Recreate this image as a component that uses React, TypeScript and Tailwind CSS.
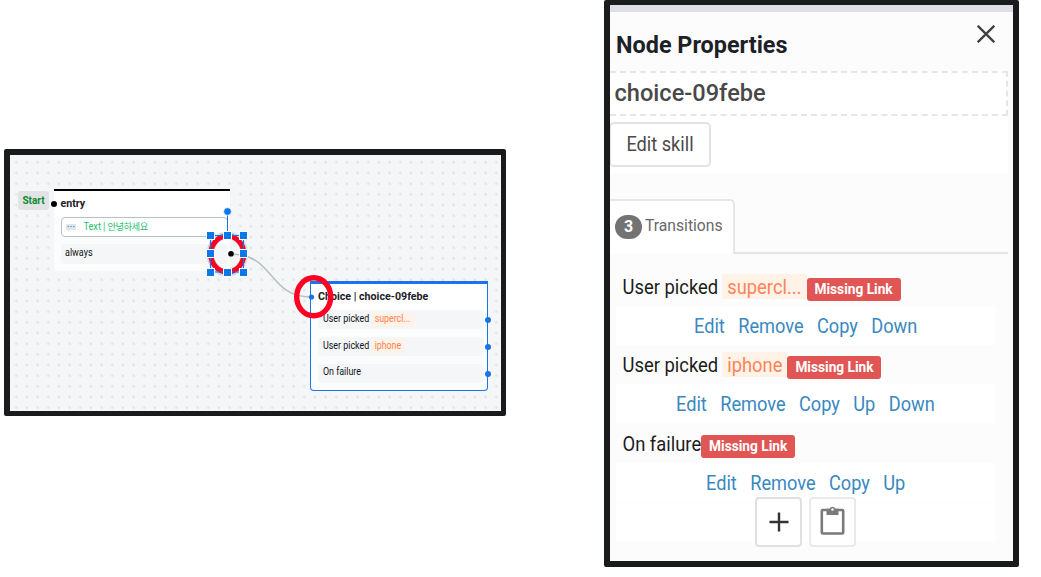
import React from "react";

function Port({ className }: { className: string }) {
  return <span className={`absolute h-[6px] w-[6px] rounded-full ${className}`} />;
}

function Handle({ className }: { className: string }) {
  return <span className={`absolute h-[7px] w-[7px] bg-[#0b78ea] outline outline-[1px] outline-white ${className}`} />;
}

function ChoiceRow({ label, value, width }: { label: string; value?: string; width?: string }) {
  return (
    <div className="relative flex h-[19px] items-center rounded-[4px] bg-[#f5f6f8] pl-[5px] text-[8.9px] text-[#101418]">
      <span className="scale-y-[1.14] whitespace-nowrap">{label}</span>
      {value && (
        <span className={`ml-[2px] flex h-[14px] items-center rounded-[2px] bg-[#fff3e8] pl-[3.5px] text-[8.8px] text-[#ff8050] ${width}`}>
          <span className="scale-y-[1.14]">{value}</span>
        </span>
      )}
      <Port className="-right-[7px] top-[7px] bg-[#1a73e8]" />
    </div>
  );
}

function Canvas() {
  return (
    <section className="relative h-[267px] w-[502px] shrink-0 overflow-hidden rounded-[2px] border-b-[5px] border-l-[6px] border-r-[5px] border-t-[6px] border-[#1a1b1c] bg-[#f5f6f8]">
      <svg className="absolute inset-0 h-full w-full">
        <defs>
          <pattern id="dots" x="0.6" y="1.7" width="10.667" height="10.667" patternUnits="userSpaceOnUse">
            <rect x="4.6" y="4.6" width="2" height="2" fill="#dcdee1" />
          </pattern>
        </defs>
        <rect width="100%" height="100%" fill="url(#dots)" />
      </svg>

      <div className="absolute left-[8px] top-[36px] flex h-[19px] w-[31px] items-center justify-center rounded-[3px] bg-[#e1e3e5] text-[10px] font-bold text-[#0b8a2f]">
        <span className="scale-y-[1.08]">Start</span>
      </div>

      <article className="absolute left-[43.5px] top-[34px] h-[82px] w-[176px] border-t-2 border-black bg-[#fbfcfc]">
        <header className="h-[26px] bg-white pl-[7px] pt-[5px] text-[10.67px] font-bold leading-[16px] text-[#1c2127]">
          <span className="inline-block scale-y-[1.08]">entry</span>
        </header>
        <div className="ml-[7px] flex h-[20px] w-[167px] items-center rounded-[4px] border border-[#b9c0c3] bg-white pl-[4px] text-[9.33px] tracking-[-0.1px] text-[#25c26e]">
          <svg width="10" height="9" viewBox="0 0 10 9">
            <path d="M0 1h10v6H4L2 8.500V7H0z" fill="#e1e5e9" />
            <path d="M1.500 3.500h1.500M4.200 3.500h1.500M7 3.500h1.500" stroke="#4b9bd8" strokeWidth="1.2" />
          </svg>
          <span className="ml-[8px] whitespace-nowrap"><span className="inline-block scale-y-[1.08]">Text |</span> <span className="text-[9.3px] tracking-[-0.5px]">안녕하세요</span></span>
        </div>
        <div className="ml-[7px] mt-[7px] flex h-[20px] w-[167px] items-center rounded-[4px] bg-[#f5f6f8] pl-[4.5px] text-[9px] text-[#101418]">
          <span className="scale-y-[1.14]">always</span>
        </div>
        <Port className="-left-[3px] top-[10px] bg-black" />
      </article>

      <article className="absolute left-[300px] top-[126px] h-[110px] w-[178px] rounded-b-[4px] border border-t-[3px] border-[#1a73e8] bg-[#fbfcfc]">
        <header className="h-[26.4px] bg-white pl-[7px] pt-[5px] text-[10.67px] font-bold leading-[15px] text-[#1c2127]">
          <span className="inline-block scale-y-[1.08]">Choice | choice-09febe</span>
        </header>
        <div className="flex flex-col gap-[7.6px] pl-[7px] pr-[3px]">
          <ChoiceRow label="User picked" value="supercl..." width="w-[43px]" />
          <ChoiceRow label="User picked" value="iphone" width="w-[34px]" />
          <ChoiceRow label="On failure" />
        </div>
      </article>

      <svg className="absolute inset-0 h-full w-full" viewBox="10 155 491 256" preserveAspectRatio="none">
        <path d="M231 254C275 254 268 297 311 297" fill="none" stroke="#b9c0c3" strokeWidth="1.5" />
        <ellipse cx="227.300" cy="254" rx="17" ry="18.800" fill="none" stroke="#a9c9f5" strokeWidth="7.500" opacity=".65" />
        <ellipse cx="227.300" cy="254" rx="16.500" ry="18" fill="none" stroke="#ff0022" strokeWidth="5.200" />
        <path d="M210.500 235.500h33v36.500h-33zM227.500 212v24" fill="none" stroke="#0b78ea" strokeWidth="1" />
        <circle cx="227.500" cy="211.500" r="3.800" fill="#0b78ea" stroke="#fff" strokeWidth=".6" />
        <circle cx="231" cy="253.800" r="2.800" fill="#000" />
        <circle cx="311.500" cy="297" r="2.600" fill="#1a73e8" />
        <ellipse cx="313.700" cy="296.800" rx="17" ry="19" fill="none" stroke="#ff0022" strokeWidth="5.400" />
      </svg>
      <Handle className="left-[197px] top-[77px]" />
      <Handle className="left-[214px] top-[77px]" />
      <Handle className="left-[230px] top-[77px]" />
      <Handle className="left-[197px] top-[95px]" />
      <Handle className="left-[230px] top-[95px]" />
      <Handle className="left-[197px] top-[114px]" />
      <Handle className="left-[214px] top-[114px]" />
      <Handle className="left-[230px] top-[114px]" />
    </section>
  );
}

function Transition({ label, value, actions, pad }: { label: string; value?: string; actions: string[]; pad: string }) {
  return (
    <div className="h-[78.4px]">
      <div className="flex h-[33px] pl-[7.5px] text-[18.4px] text-[#1c1c1c]">
        <span className="mt-[4px] scale-y-[1.09] whitespace-nowrap leading-[22px]">{label}</span>
        {value && (
          <span className="ml-[4px] mt-px flex h-[25px] items-center whitespace-nowrap bg-[#fff3e8] px-[5px] text-[#ff8458]">
            <span className="scale-y-[1.09]">{value}</span>
          </span>
        )}
        <span className="mt-[5px] flex h-[23px] w-[94px] items-center justify-center whitespace-nowrap rounded-[3px] bg-[#e15554] pb-[1px] text-[13.7px] font-bold text-white">
          <span className="scale-y-[1.08]">Missing Link</span>
        </span>
      </div>
      <div className={`ml-px flex h-[39px] w-[379px] gap-[13.4px] bg-white text-[18.2px] leading-[39px] text-[#3a88c0] ${pad}`}>
        {actions.map((a) => (
          <a key={a} className="scale-y-[1.09] whitespace-nowrap">{a}</a>
        ))}
      </div>
    </div>
  );
}

function Properties() {
  return (
    <aside className="relative flex h-[567px] w-[415px] shrink-0 flex-col overflow-hidden rounded-[2px] border-[6px] border-t-[5px] border-[#1a1b1c] bg-[#fcfcfc]">
      <div className="h-[7px] shrink-0 bg-[#dcdfe3]" />
      <header className="flex h-[59px] shrink-0 justify-between pl-[6px] pr-[18.5px]">
        <h1 className="mt-[19px] scale-y-[1.04] text-[23.4px] font-bold leading-[28px] text-[#1c2127]">Node Properties</h1>
        <svg className="mt-[13px]" width="18" height="18" viewBox="0 0 18 18" stroke="#404040" strokeWidth="2.300">
          <path d="M.7.7l16.600 16.600M17.300.7L.7 17.300" />
        </svg>
      </header>
      <div className="h-[102px] w-[398px] shrink-0 bg-white">
        <div className="h-[45px] border-2 border-l-0 border-dashed border-[#e6e6e6] pl-[4.500px] text-[23.600px] font-medium leading-[41px] text-[#484848]">choice-09febe</div>
        <button className="-ml-px mt-[6px] flex h-[45px] w-[102px] items-center justify-center rounded-[5px] border-2 border-[#e2e2e2] bg-white pb-px text-[18.2px] text-[#4a4a4a]">
          <span className="scale-y-[1.09]">Edit skill</span>
        </button>
      </div>
      <div className="mt-[26px] flex h-[55px] w-[398px] shrink-0">
        <div className="flex w-[125px] rounded-tr-[5px] border-r-2 border-t-2 border-[#e6e6e6] bg-white pl-[5px]">
          <span className="mt-[14px] flex h-[24px] w-[27px] items-center justify-center rounded-full bg-[#737373] text-[16px] font-bold text-white">3</span>
          <span className="ml-[3px] mt-[12.5px] scale-y-[1.07] text-[15.7px] leading-[24px] text-[#686868]">Transitions</span>
        </div>
        <div className="flex-1 border-b-2 border-[#e6e6e6]" />
      </div>
      <div className="flex flex-col pl-[5px] pt-[19px]">
        <Transition label="User picked" value="supercl..." pad="pl-[78px]" actions={["Edit", "Remove", "Copy", "Down"]} />
        <Transition label="User picked" value="iphone" pad="pl-[60px]" actions={["Edit", "Remove", "Copy", "Up", "Down"]} />
        <Transition label="On failure" pad="pl-[90px]" actions={["Edit", "Remove", "Copy", "Up"]} />
        <div className="relative -mt-[11px] ml-px flex h-[45px] w-[379px] gap-[7px] pl-[139px]">
          <div className="absolute inset-x-0 bottom-0 h-[39px] bg-white" />
          <button className="relative flex h-[50px] w-[47px] shrink-0 items-center justify-center rounded-[4px] border-2 border-[#e0e0e0] bg-white">
            <svg width="20" height="20" viewBox="0 0 20 20" stroke="#333" strokeWidth="2.400"><path d="M.5 10h19M10 .5v19" /></svg>
          </button>
          <button className="relative flex h-[50px] w-[47px] shrink-0 items-center justify-center rounded-[4px] border-2 border-[#eaeaea] bg-white">
            <svg className="-mt-[3px]" width="25" height="29" viewBox="0 0 25 29" fill="none">
              <rect x="1.800" y="4" width="21.400" height="23.500" rx="1" stroke="#7a7a7a" strokeWidth="2.600" />
              <path d="M6.500 2.800h3a3.300 3.300 0 0 1 6 0h3v6.200h-12z" fill="#7a7a7a" />
              <circle cx="12.500" cy="3.500" r="1.200" fill="#fff" />
            </svg>
          </button>
        </div>
      </div>
    </aside>
  );
}

export default function App() {
  return (
    <main className="flex h-[577px] w-[1041px] items-start overflow-hidden bg-white pl-[4px] font-[Roboto,'Noto_Sans_CJK_KR',sans-serif]">
      <div className="pt-[149px]"><Canvas /></div>
      <div className="ml-[98px]"><Properties /></div>
    </main>
  );
}
